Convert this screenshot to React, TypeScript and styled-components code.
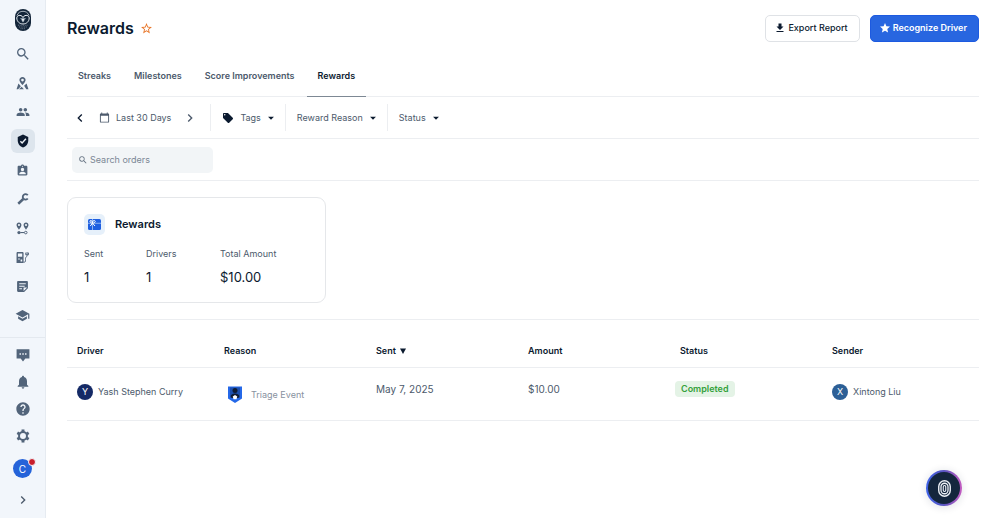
import React from "react";
import styled, { createGlobalStyle, css } from "styled-components";
import {
  MdArrowDropDown,
  MdAssignmentInd,
  MdCalendarToday,
  MdChevronLeft,
  MdChevronRight,
  MdFileDownload,
  MdHelp,
  MdLocalOffer,
  MdNotifications,
  MdPeople,
  MdSchool,
  MdSearch,
  MdStar,
  MdStarBorder,
} from "react-icons/md";

const GlobalStyle = createGlobalStyle`
  *, *::before, *::after { box-sizing: border-box; }
  body {
    margin: 0;
    background: #ffffff;
    color: #0b1a2f;
    font-family: Inter, "Liberation Sans", sans-serif;
    font-size: 9px;
    line-height: 16px;
  }
  button, input { font: inherit; color: inherit; }
  button { cursor: pointer; }
  svg { display: block; flex: none; }
`;

const line = "#eceef1";
const slate = "#4c5a6c";
const navy = "#0b1a2f";

const Shell = styled.div`
  display: flex;
  min-height: 100vh;
`;

const Sidebar = styled.nav`
  display: flex;
  flex-direction: column;
  align-items: center;
  flex: none;
  width: 46px;
  padding-top: 9px;
  background: #f2f6fb;
  border-right: 1px solid #e6ebf1;
`;

const NavGroup = styled.ul<{ $gap: number }>`
  display: flex;
  flex-direction: column;
  gap: ${(p) => p.$gap}px;
  margin: 0;
  padding: 0;
  list-style: none;
`;

const PrimaryNav = styled(NavGroup)`
  margin-top: 11px;
`;

const NavDivider = styled.hr`
  align-self: stretch;
  margin: 10px 0 5px;
  border: 0;
  border-top: 1px solid #e4e9ef;
`;

const NavLink = styled.a<{ $active?: boolean }>`
  display: flex;
  align-items: center;
  justify-content: center;
  width: 24px;
  height: 24px;
  border-radius: 6px;
  color: ${(p) => (p.$active ? navy : "#52647a")};
  background: ${(p) => (p.$active ? "#dde5ed" : "transparent")};
`;

const PlainButton = styled.button`
  display: flex;
  align-items: center;
  justify-content: center;
  padding: 0;
  border: 0;
  background: none;
`;

const AccountButton = styled(PlainButton)`
  position: relative;
  width: 19px;
  height: 19px;
  margin-top: 11px;
  border-radius: 50%;
  background: #2563d9;
  color: #ffffff;
  font-size: 10px;
`;

const AlertDot = styled.span`
  position: absolute;
  top: -1px;
  right: -4px;
  width: 8px;
  height: 8px;
  border: 1px solid #f2f6fb;
  border-radius: 50%;
  background: #c81e2b;
`;

const ExpandButton = styled(PlainButton)`
  margin-top: 14px;
  color: ${slate};
`;

const Main = styled.main`
  flex: 1;
  min-width: 0;
  padding: 14px 21px 24px;
`;

const Header = styled.header`
  display: flex;
  align-items: center;
  justify-content: space-between;
  height: 28px;
`;

const TitleGroup = styled.div`
  display: flex;
  align-items: center;
  gap: 6px;
`;

const Title = styled.h1`
  margin: 0;
  font-size: 16px;
  line-height: 24px;
  font-weight: 600;
`;

const FavoriteButton = styled(PlainButton)`
  color: #e87426;
`;

const Actions = styled.div`
  display: flex;
  gap: 10px;
`;

const ActionButton = styled.button<{ $primary?: boolean }>`
  display: flex;
  align-items: center;
  gap: 2px;
  height: 27px;
  padding: 0 11px 0 8px;
  border: 1px solid #dfe2e6;
  border-radius: 5px;
  background: #ffffff;
  font-weight: 500;
  ${(p) =>
    p.$primary &&
    css`
      border-color: #1d5ae0;
      background: #2866e0;
      color: #ffffff;
      font-weight: 600;
    `}
`;

const Tabs = styled.div`
  display: flex;
  gap: 1px;
  height: 41px;
  margin-top: 14px;
  border-bottom: 1px solid ${line};
`;

const Tab = styled.button<{ $active?: boolean }>`
  padding: 0 11px;
  margin-bottom: -1px;
  border: 0;
  border-bottom: 1px solid ${(p) => (p.$active ? "#7d8894" : "transparent")};
  background: none;
  color: ${(p) => (p.$active ? navy : slate)};
  font-weight: 600;
`;

const Filters = styled.div`
  display: flex;
  align-items: center;
  height: 42px;
  border-bottom: 1px solid ${line};
`;

const DateRange = styled.div`
  display: flex;
  align-items: center;
  gap: 11px;
  padding: 0 12px 0 5px;
  color: ${slate};
`;

const DateButton = styled(PlainButton)`
  gap: 6px;
`;

const StepButton = styled(PlainButton)<{ $strong?: boolean }>`
  color: ${(p) => (p.$strong ? navy : slate)};
`;

const FilterButton = styled(PlainButton)`
  gap: 4px;
  height: 27px;
  padding: 0 7px 0 11px;
  border-left: 1px solid ${line};
  color: ${slate};
`;

const FilterLabel = styled.span`
  display: flex;
  align-items: center;
  gap: 6px;
  & > svg { color: ${navy}; }
`;

const Caret = styled(MdArrowDropDown)`
  color: ${navy};
  margin-left: -1px;
`;

const SearchRow = styled.div`
  display: flex;
  align-items: center;
  height: 42px;
  padding-left: 5px;
  border-bottom: 1px solid ${line};
`;

const SearchField = styled.label`
  display: flex;
  align-items: center;
  gap: 2px;
  width: 141px;
  height: 26px;
  padding: 0 6px;
  border-radius: 5px;
  background: #f2f5f7;
  color: #667382;
`;

const SearchInput = styled.input`
  flex: 1;
  min-width: 0;
  padding: 0;
  border: 0;
  outline: 0;
  background: none;
  &::placeholder { color: #7b8795; opacity: 1; }
`;

const Card = styled.section`
  width: 259px;
  margin: 16px 0;
  padding: 16px;
  border: 1px solid #e5e7ea;
  border-radius: 9px;
`;

const CardHeader = styled.div`
  display: flex;
  align-items: center;
  gap: 10px;
`;

const CardIcon = styled.span`
  display: flex;
  align-items: center;
  justify-content: center;
  width: 21px;
  height: 21px;
  border-radius: 5px;
  background: #e6f0fa;
`;

const CardTitle = styled.h2`
  margin: 0;
  font-size: 11px;
  line-height: 15px;
  font-weight: 600;
`;

const Stats = styled.dl`
  display: grid;
  grid-template-columns: 62px 74px 1fr;
  margin: 11px 0 0;
`;

const StatLabel = styled.dt`
  color: ${slate};
`;

const StatValue = styled.dd`
  margin: 6px 0 0;
  font-size: 13px;
  line-height: 18px;
`;

const TableSection = styled.div`
  padding-top: 15px;
  border-top: 1px solid ${line};
`;

const Table = styled.table`
  width: 100%;
  table-layout: fixed;
  border-collapse: separate;
  border-spacing: 0;
`;

const HeadCell = styled.th`
  height: 33px;
  padding: 0 5px;
  border-bottom: 1px solid ${line};
  text-align: left;
  font-size: 9px;
  font-weight: 600;
  &:first-child { padding-left: 10px; }
`;

const SortButton = styled(PlainButton)`
  gap: 4px;
`;

const Cell = styled.td<{ $figure?: boolean }>`
  height: 53px;
  padding: 13px 5px 0;
  border-bottom: 1px solid ${line};
  vertical-align: top;
  color: ${slate};
  font-size: ${(p) => (p.$figure ? 10 : 9)}px;
  &:first-child { padding-left: 10px; }
`;

const Person = styled.div`
  display: flex;
  align-items: center;
  gap: 5px;
  padding-top: 3px;
  white-space: nowrap;
`;

const Initial = styled.span<{ $color: string }>`
  display: flex;
  align-items: center;
  justify-content: center;
  width: 16px;
  height: 16px;
  border-radius: 50%;
  background: ${(p) => p.$color};
  color: #ffffff;
`;

const Reason = styled.div`
  display: flex;
  align-items: center;
  gap: 9px;
  padding: 5px 0 0 4px;
  color: #8791a0;
`;

const Badge = styled.span`
  display: inline-block;
  margin-left: -5px;
  padding: 0 6px;
  border-radius: 4px;
  background: #e4f3e6;
  color: #34a13c;
  font-weight: 600;
`;

const AssistantButton = styled.button`
  position: fixed;
  right: 38px;
  bottom: 12px;
  display: flex;
  align-items: center;
  justify-content: center;
  width: 36px;
  height: 36px;
  padding: 0;
  border: 2px solid transparent;
  border-radius: 50%;
  background:
    linear-gradient(#14263d, #14263d) padding-box,
    linear-gradient(90deg, #3f63e8, #5a55c0 50%, #c45bc0) border-box;
  box-shadow: 0 1px 8px rgba(20, 38, 61, 0.14);
`;

const OwlLogo = () => (
  <svg width="16" height="22" viewBox="0 0 16 22" aria-label="Home">
    <rect width="16" height="22" rx="8" fill="#14263a" />
    <g fill="none" stroke="#e8eef4" strokeWidth="1">
      <path d="M2 6.5C3 3.500 5.500 2.300 8 2.300s5 1.200 6 4.200" strokeWidth=".7" />
      <path d="M1.800 9c0-2.600 3.700-4 6.200-.8C10.500 5 14.200 6.400 14.200 9c0 3.500-2.800 6-6.200 6S1.800 12.500 1.800 9Z" />
      <path d="M8 8v4" strokeWidth=".8" />
      <path d="M3 16.200h10M4 18h8M5.500 19.700h5" stroke="#8c9aa8" strokeWidth=".7" strokeDasharray="1 .7" />
    </g>
    <path d="M5 9h6l-3 4.500Z" fill="#8798a8" />
    <path d="M7 10h2l-1 3.200Z" fill="#fff" />
  </svg>
);

const CoverageIcon = () => (
  <svg width="13" height="13" viewBox="0 0 24 24" fill="currentColor">
    <path fillRule="evenodd" d="M12 0C8.700 0 6.300 2.500 6.300 5.600c0 3.600 5.700 9.400 5.700 9.400s5.700-5.800 5.700-9.400C17.700 2.500 15.300 0 12 0Zm0 3.200a2.500 2.500 0 1 1 0 5 2.500 2.500 0 0 1 0-5Z" />
    <path d="M4.500 12 1 22.500h3L9 17ZM10.500 18l-5 4.500h9ZM15 16l4.500-4L23 22.500h-4Z" />
  </svg>
);

const ShieldCheckIcon = () => (
  <svg width="14" height="14" viewBox="0 0 24 24" fill="currentColor">
    <path d="M12 1 3 5v6c0 5.550 3.840 10.740 9 12 5.160-1.260 9-6.450 9-12V5Z" />
    <path d="m7.500 12.500 3 3 6.500-7.500" fill="none" stroke="#eef2f6" strokeWidth="2.400" />
  </svg>
);

const WrenchIcon = () => (
  <svg width="12" height="12" viewBox="0 0 24 24">
    <path d="M2.500 21.500 12.500 12" stroke="currentColor" strokeWidth="5" />
    <path d="M21.500 4.500A5.500 5.500 0 1 0 21.500 11" fill="none" stroke="currentColor" strokeWidth="3.800" />
  </svg>
);

const RouteIcon = () => (
  <svg width="13" height="13" viewBox="0 0 24 24" fill="currentColor">
    <path fillRule="evenodd" d="M5.500 1C2.800 1 1 3 1 5.400 1 8.400 5.500 14 5.500 14S10 8.400 10 5.400C10 3 8.200 1 5.500 1Zm0 2.800a1.900 1.900 0 1 1 0 3.800 1.900 1.900 0 0 1 0-3.800ZM18.500 1C15.800 1 14 3 14 5.400c0 3 4.500 8.600 4.500 8.600S23 8.400 23 5.400C23 3 21.200 1 18.500 1Zm0 2.800a1.900 1.900 0 1 1 0 3.800 1.900 1.900 0 0 1 0-3.800Z" />
    <circle cx="5.500" cy="19.500" r="3" />
    <path d="M8 18.500h7v2H8z" />
    <circle cx="18" cy="19.500" r="2.400" fill="none" stroke="currentColor" strokeWidth="1.800" />
  </svg>
);

const FuelIcon = () => (
  <svg width="13" height="13" viewBox="0 0 24 24" fill="currentColor">
    <path fillRule="evenodd" d="M3 2h9c1.100 0 2 .9 2 2v18H1V4c0-1.100.9-2 2-2Zm.5 2.500v6h8v-6Zm1 9v2.500h2v-2.500Zm4 2v4h3v-4Z" />
    <path d="M14 20.500h2c2 0 1.500-4 1.500-7s3-2 3-5V2M18 3v4h5V3" fill="none" stroke="currentColor" strokeWidth="1.800" />
  </svg>
);

const ReportIcon = () => (
  <svg width="13" height="13" viewBox="0 0 24 24" fill="currentColor">
    <path fillRule="evenodd" d="M4 2h16c1.100 0 2 .9 2 2v11l-7 7H4c-1.100 0-2-.9-2-2V4c0-1.100.9-2 2-2Zm2 4v2h12V6Zm0 4.500v2h10v-2ZM6 15v2h5v-2Zm8-1v6.500l6.500-6.500Z" />
  </svg>
);

const MessageIcon = () => (
  <svg width="14" height="14" viewBox="0 0 24 24" fill="currentColor">
    <path fillRule="evenodd" d="M1 2h22v16h-7l-4 5-4-5H1Zm5 7v2.500h2.500V9Zm4.800 0v2.500h2.500V9Zm4.700 0v2.500H18V9Z" />
  </svg>
);

const GearIcon = () => (
  <svg width="14" height="14" viewBox="0 0 24 24" fill="none" stroke="currentColor">
    <circle cx="12" cy="12" r="6.800" strokeWidth="3.400" />
    {[0, 60, 120, 180, 240, 300].map((angle) => (
      <path key={angle} d="M12 .8v4" strokeWidth="5" transform={`rotate(${angle} 12 12)`} />
    ))}
  </svg>
);

const GiftCardIcon = () => (
  <svg width="13" height="11" viewBox="0 0 26 22">
    <rect width="26" height="22" rx="3" fill="#1f5fe0" />
    <path d="M9 0v22M0 8.500h26" stroke="#a9c8f5" strokeWidth="1.600" />
    <path d="M9 8.500C3 8 3 2.500 6 3s3 5.500 3 5.500S9 2.500 12.500 3 15 8 9 8.500Zm0 0L4.500 14M9 8.500l5 5.500" fill="none" stroke="#fff" strokeWidth="2" />
  </svg>
);

const TriageIcon = () => (
  <svg width="14" height="17" viewBox="0 0 28 34">
    <path d="M0 1h28v24l-14 9L0 25Z" fill="#2468e8" />
    <path d="M4 3h20v18H4Z" fill="#1b4fae" />
    <circle cx="14" cy="9" r="5" fill="#0e1b33" />
    <path d="M5 23c0-6 4-8 9-8s9 2 9 8l-4 1H9Z" fill="#0e1b33" />
    <path d="m14 18 4.500 3-1.500 5.500h-6L9.500 21Z" fill="#fff" />
  </svg>
);

const AssistantIcon = () => (
  <svg width="13" height="17" viewBox="0 0 26 34" fill="none" stroke="#eef2f7">
    <rect x="1.500" y="1.500" width="23" height="31" rx="11.500" strokeWidth="2.800" />
    <rect x="6" y="6.500" width="14" height="21" rx="7" strokeWidth="2.600" />
    <rect x="10.500" y="11" width="5" height="12" rx="2.500" strokeWidth="2.200" />
  </svg>
);

const SortArrow = () => (
  <svg width="6" height="6" viewBox="0 0 6 6" fill="currentColor">
    <path d="M0 .5h6L3 6Z" />
  </svg>
);

const primaryNav = [
  { label: "Search", icon: <MdSearch size={16} /> },
  { label: "Coverage map", icon: <CoverageIcon /> },
  { label: "Drivers", icon: <MdPeople size={14} /> },
  { label: "Safety", icon: <ShieldCheckIcon />, active: true },
  { label: "Compliance", icon: <MdAssignmentInd size={13} /> },
  { label: "Maintenance", icon: <WrenchIcon /> },
  { label: "Routes", icon: <RouteIcon /> },
  { label: "Fuel and energy", icon: <FuelIcon /> },
  { label: "Reports", icon: <ReportIcon /> },
  { label: "Training", icon: <MdSchool size={15} /> },
];

const secondaryNav = [
  { label: "Messages", icon: <MessageIcon /> },
  { label: "Notifications", icon: <MdNotifications size={16} /> },
  { label: "Help", icon: <MdHelp size={16} /> },
  { label: "Settings", icon: <GearIcon /> },
];

const tabs = ["Streaks", "Milestones", "Score Improvements", "Rewards"];

const stats = [
  { label: "Sent", value: "1" },
  { label: "Drivers", value: "1" },
  { label: "Total Amount", value: "$10.00" },
];

export default function App() {
  return (
    <>
      <GlobalStyle />
      <Shell>
        <Sidebar aria-label="Main">
          <OwlLogo />
          <PrimaryNav $gap={5}>
            {primaryNav.map((item) => (
              <li key={item.label}>
                <NavLink href="#" aria-label={item.label} $active={item.active}>
                  {item.icon}
                </NavLink>
              </li>
            ))}
          </PrimaryNav>
          <NavDivider />
          <NavGroup $gap={3}>
            {secondaryNav.map((item) => (
              <li key={item.label}>
                <NavLink href="#" aria-label={item.label}>
                  {item.icon}
                </NavLink>
              </li>
            ))}
          </NavGroup>
          <AccountButton aria-label="Account">
            C<AlertDot />
          </AccountButton>
          <ExpandButton aria-label="Expand menu">
            <MdChevronRight size={16} />
          </ExpandButton>
        </Sidebar>

        <Main>
          <Header>
            <TitleGroup>
              <Title>Rewards</Title>
              <FavoriteButton aria-label="Add to favorites">
                <MdStarBorder size={13} />
              </FavoriteButton>
            </TitleGroup>
            <Actions>
              <ActionButton>
                <MdFileDownload size={12} />
                Export Report
              </ActionButton>
              <ActionButton $primary>
                <MdStar size={12} />
                Recognize Driver
              </ActionButton>
            </Actions>
          </Header>

          <Tabs role="tablist">
            {tabs.map((name) => (
              <Tab
                key={name}
                role="tab"
                aria-selected={name === "Rewards"}
                $active={name === "Rewards"}
              >
                {name}
              </Tab>
            ))}
          </Tabs>

          <Filters>
            <DateRange>
              <StepButton aria-label="Previous period" $strong>
                <MdChevronLeft size={16} />
              </StepButton>
              <DateButton>
                <MdCalendarToday size={11} />
                Last 30 Days
              </DateButton>
              <StepButton aria-label="Next period">
                <MdChevronRight size={16} />
              </StepButton>
            </DateRange>
            <FilterButton>
              <FilterLabel>
                <MdLocalOffer size={12} />
                Tags
              </FilterLabel>
              <Caret size={14} />
            </FilterButton>
            <FilterButton>
              <FilterLabel>Reward Reason</FilterLabel>
              <Caret size={14} />
            </FilterButton>
            <FilterButton>
              <FilterLabel>Status</FilterLabel>
              <Caret size={14} />
            </FilterButton>
          </Filters>

          <SearchRow>
            <SearchField>
              <MdSearch size={10} />
              <SearchInput placeholder="Search orders" aria-label="Search orders" />
            </SearchField>
          </SearchRow>

          <Card>
            <CardHeader>
              <CardIcon>
                <GiftCardIcon />
              </CardIcon>
              <CardTitle>Rewards</CardTitle>
            </CardHeader>
            <Stats>
              {stats.map((stat) => (
                <div key={stat.label}>
                  <StatLabel>{stat.label}</StatLabel>
                  <StatValue>{stat.value}</StatValue>
                </div>
              ))}
            </Stats>
          </Card>

          <TableSection>
            <Table>
              <thead>
                <tr>
                  <HeadCell>Driver</HeadCell>
                  <HeadCell>Reason</HeadCell>
                  <HeadCell aria-sort="descending">
                    <SortButton>
                      Sent
                      <SortArrow />
                    </SortButton>
                  </HeadCell>
                  <HeadCell>Amount</HeadCell>
                  <HeadCell>Status</HeadCell>
                  <HeadCell>Sender</HeadCell>
                </tr>
              </thead>
              <tbody>
                <tr>
                  <Cell>
                    <Person>
                      <Initial $color="#152a66">Y</Initial>
                      Yash Stephen Curry
                    </Person>
                  </Cell>
                  <Cell>
                    <Reason>
                      <TriageIcon />
                      Triage Event
                    </Reason>
                  </Cell>
                  <Cell $figure>May 7, 2025</Cell>
                  <Cell $figure>$10.00</Cell>
                  <Cell>
                    <Badge>Completed</Badge>
                  </Cell>
                  <Cell>
                    <Person>
                      <Initial $color="#2c5f96">X</Initial>
                      Xintong Liu
                    </Person>
                  </Cell>
                </tr>
              </tbody>
            </Table>
          </TableSection>
        </Main>
      </Shell>
      <AssistantButton aria-label="Open assistant">
        <AssistantIcon />
      </AssistantButton>
    </>
  );
}
